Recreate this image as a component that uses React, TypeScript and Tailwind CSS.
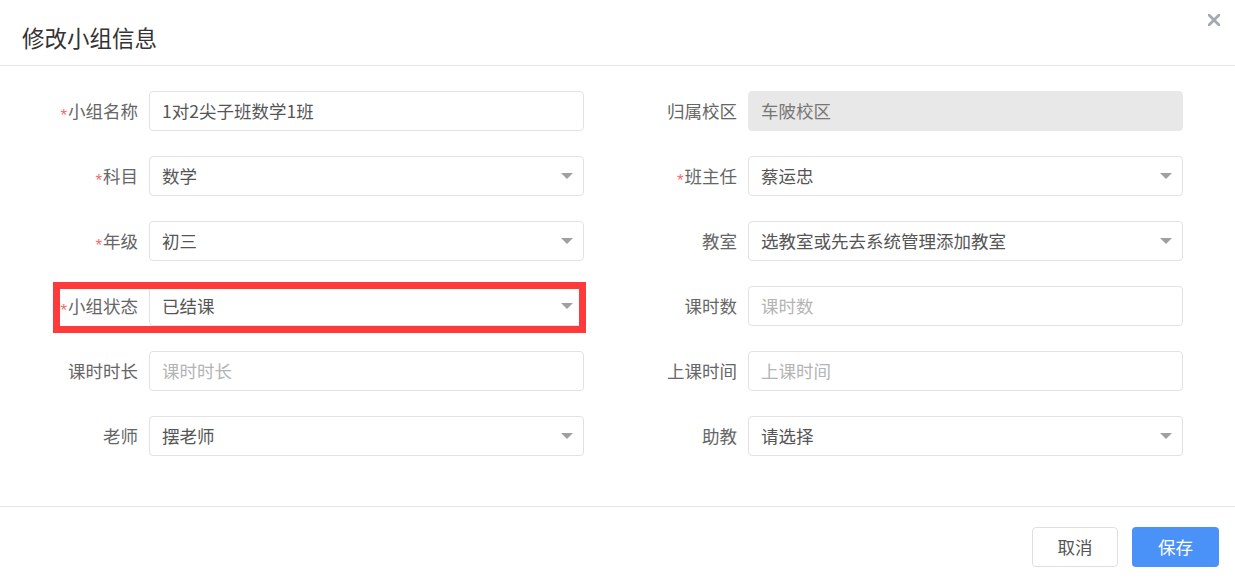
import React from "react";

const FONT = { fontFamily: '"Noto Sans CJK SC", "Microsoft YaHei", sans-serif' };

type Field = {
  label: string;
  required?: boolean;
  value?: string;
  placeholder?: string;
  select?: boolean;
  disabled?: boolean;
  highlight?: boolean;
};

const FIELDS: Field[] = [
  { label: "小组名称", required: true, value: "1对2尖子班数学1班" },
  { label: "归属校区", value: "车陂校区", disabled: true },
  { label: "科目", required: true, value: "数学", select: true },
  { label: "班主任", required: true, value: "蔡运忠", select: true },
  { label: "年级", required: true, value: "初三", select: true },
  { label: "教室", value: "选教室或先去系统管理添加教室", select: true },
  { label: "小组状态", required: true, value: "已结课", select: true, highlight: true },
  { label: "课时数", placeholder: "课时数" },
  { label: "课时时长", placeholder: "课时时长" },
  { label: "上课时间", placeholder: "上课时间" },
  { label: "老师", value: "摆老师", select: true },
  { label: "助教", value: "请选择", select: true },
];

function Caret() {
  return (
    <svg width="12" height="6" viewBox="0 0 12 6" className="shrink-0">
      <polygon points="0,0 12,0 6,6" fill="#a0a0a0" />
    </svg>
  );
}

function FormItem({ field }: { field: Field }) {
  return (
    <div className="relative flex items-center h-[40px]">
      <div className="w-[149px] pr-[11px] flex items-center justify-end text-[17.5px] text-[#666]">
        {field.required && (
          <span className="font-['Liberation_Sans',sans-serif] text-[#f56c6c] text-[17px] leading-none mr-[1px] translate-y-[4px]">
            *
          </span>
        )}
        <span>{field.label}</span>
      </div>
      <div
        className={
          field.disabled
            ? "w-[435px] h-[40px] rounded-[4px] border border-[#e8e8e8] bg-[#e8e8e8] flex items-center pl-[12px] pr-[10px] text-[17.5px] text-[#777]"
            : "w-[435px] h-[40px] rounded-[4px] border border-[#e2e2e2] bg-white flex items-center pl-[12px] pr-[10px] text-[17.5px] text-[#555]"
        }
      >
        {field.value ? (
          <span className="flex-1 truncate">{field.value}</span>
        ) : (
          <span className="flex-1 truncate text-[#b4b4b4]">{field.placeholder}</span>
        )}
        {field.select && <Caret />}
      </div>
      {field.highlight && (
        <div className="absolute left-[53px] -top-[4px] w-[533px] h-[51px] border-[7px] border-[#fe3a3a] pointer-events-none" />
      )}
    </div>
  );
}

export default function App() {
  return (
    <div className="relative w-[1235px] h-[580px] bg-white overflow-hidden" style={FONT}>
      {/* header */}
      <div className="h-[66px] border-b border-[#e8e8e8] pt-[20px] pl-[22px]">
        <h2 className="text-[22.5px] leading-[34px] text-[#333]">修改小组信息</h2>
      </div>
      <button className="absolute top-[13px] right-[14px] w-[14px] h-[14px] flex items-center justify-center">
        <svg width="12" height="12" viewBox="0 0 12 12">
          <path d="M1 1 L11 11 M11 1 L1 11" stroke="#a4a9b1" strokeWidth="2.8" strokeLinecap="round" />
        </svg>
      </button>

      {/* form */}
      <div className="h-[440px] pt-[25px]">
        <div className="grid grid-cols-[599px_599px] gap-y-[25px]">
          {FIELDS.map((f) => (
            <FormItem key={f.label} field={f} />
          ))}
        </div>
      </div>

      {/* footer */}
      <div className="border-t border-[#e8e8e8] pt-[20px] pr-[16px] flex justify-end gap-[14px]">
        <button className="w-[86px] h-[40px] rounded-[4px] border border-[#dcdfe6] bg-white text-[17.5px] text-[#555]">
          取消
        </button>
        <button className="w-[87px] h-[40px] rounded-[4px] bg-[#4a92f7] text-[17.5px] text-white">
          保存
        </button>
      </div>
    </div>
  );
}
